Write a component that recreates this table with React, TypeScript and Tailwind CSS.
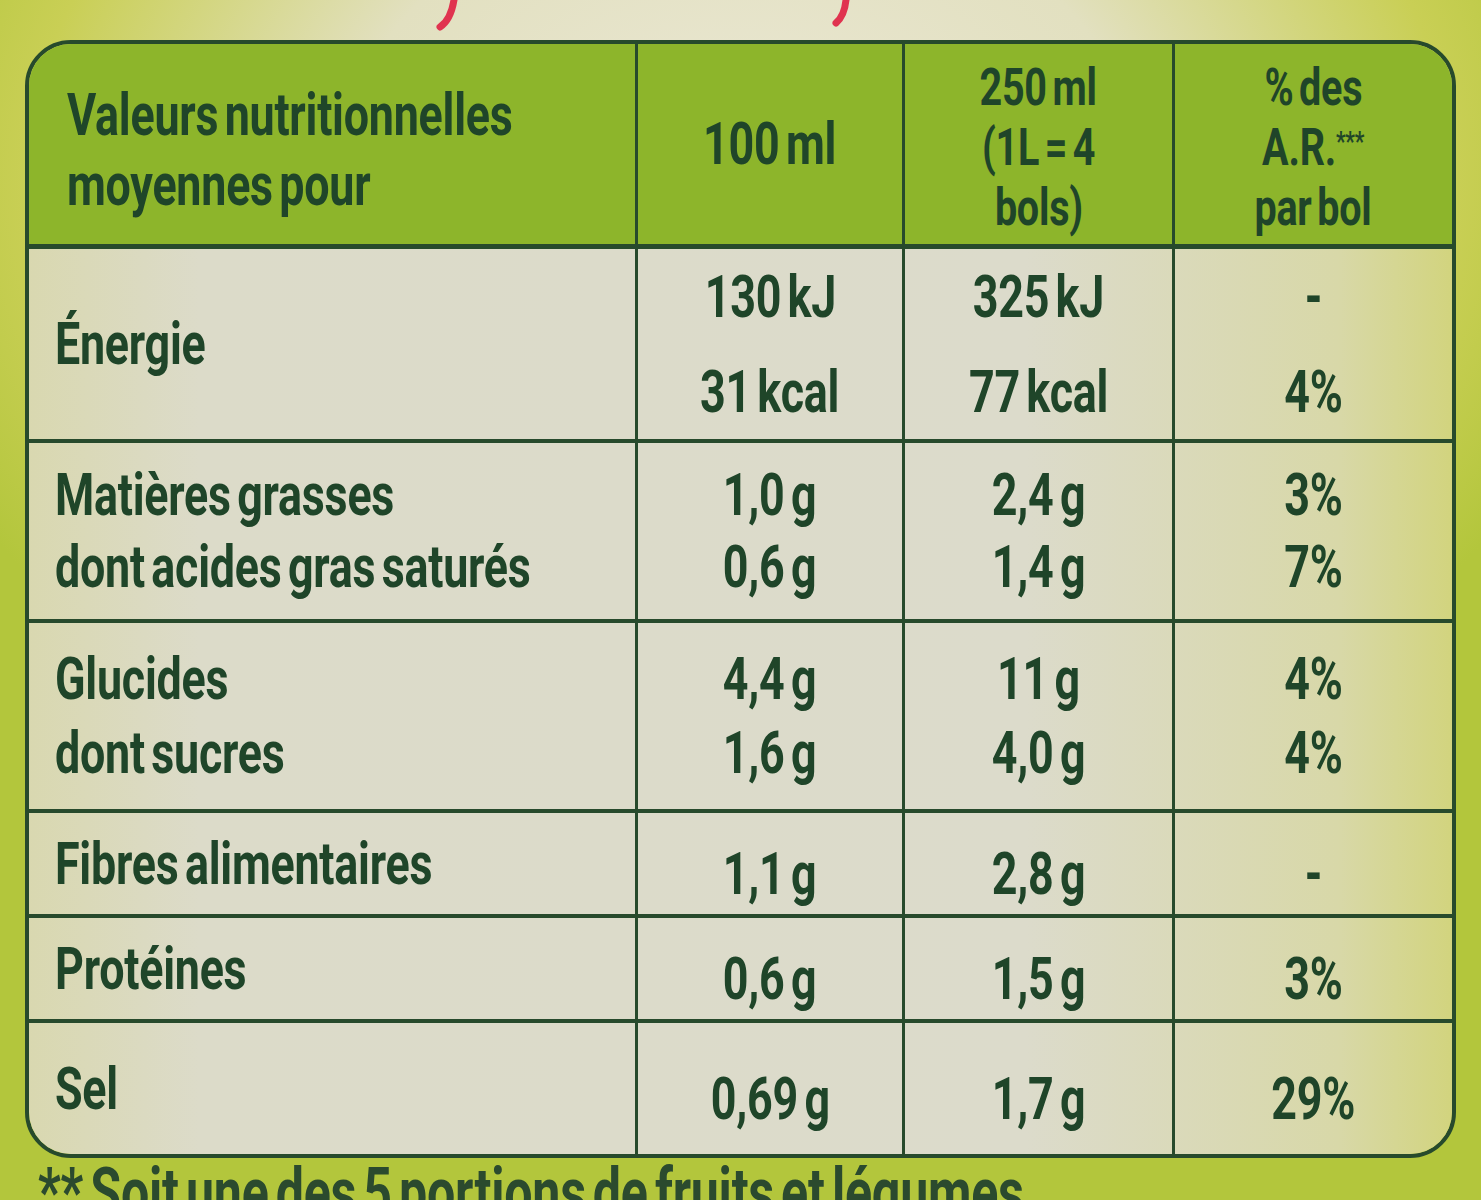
import React from "react"

const ink = "text-[#1f4529]"

const Line = ({ children, left }: { children: React.ReactNode; left?: boolean }) => (
  <span
    className={`inline-block whitespace-nowrap scale-x-[0.76] [word-spacing:-0.1em] ${
      left ? "origin-left" : "origin-center"
    }`}
  >
    {children}
  </span>
)

type Row = {
  label: string[]
  a: string[]
  b: string[]
  c: string[]
  h: string
  gap: string
}

const rows: Row[] = [
  { label: ["Énergie"], a: ["130 kJ", "31 kcal"], b: ["325 kJ", "77 kcal"], c: ["-", "4%"], h: "h-[190px]", gap: "gap-[35px]" },
  {
    label: ["Matières grasses", "dont acides gras saturés"],
    a: ["1,0 g", "0,6 g"],
    b: ["2,4 g", "1,4 g"],
    c: ["3%", "7%"],
    h: "h-[180px]",
    gap: "gap-[12px]",
  },
  { label: ["Glucides", "dont sucres"], a: ["4,4 g", "1,6 g"], b: ["11 g", "4,0 g"], c: ["4%", "4%"], h: "h-[190px]", gap: "gap-[14px]" },
  { label: ["Fibres alimentaires"], a: ["1,1 g"], b: ["2,8 g"], c: ["-"], h: "h-[105px]", gap: "gap-0" },
  { label: ["Protéines"], a: ["0,6 g"], b: ["1,5 g"], c: ["3%"], h: "h-[105px]", gap: "gap-0" },
  { label: ["Sel"], a: ["0,69 g"], b: ["1,7 g"], c: ["29%"], h: "h-[135px]", gap: "gap-0" },
]

const grid = "grid grid-cols-[606px_267px_270px_279px]"

const Cell = ({ lines, gap, first, valueShift }: { lines: string[]; gap: string; first?: boolean; valueShift?: boolean }) => (
  <div
    className={`flex flex-col justify-center leading-[60px] ${gap} ${
      first ? "items-start pl-[26px]" : "items-center border-l-[3px] border-[#274a2c]"
    } ${valueShift ? "pt-[20px]" : ""}`}
  >
    {lines.map((l, i) => (
      <Line key={i} left={first}>
        {l}
      </Line>
    ))}
  </div>
)

export default function App() {
  return (
    <div
      className={`h-[1200px] w-[1481px] overflow-hidden bg-[radial-gradient(ellipse_60%_55%_at_50%_15%,#ebe8d6_0%,#e2e0c0_45%,#c9cf55_80%,#b3c63c_100%)] font-['Roboto',sans-serif] font-bold tracking-[-0.02em] ${ink}`}
    >
      {/* red scraps of the line above */}
      <div className="flex h-[40px] items-start">
        <svg width="30" height="32" viewBox="0 0 30 32" className="ml-[430px]">
          <path d="M24 0 C22 12 18 22 10 27" stroke="#e0334f" strokeWidth="7" fill="none" strokeLinecap="round" />
        </svg>
        <svg width="30" height="30" viewBox="0 0 30 30" className="ml-[366px]">
          <path d="M20 0 C19 10 16 18 10 23" stroke="#e0334f" strokeWidth="7" fill="none" strokeLinecap="round" />
        </svg>
      </div>

      <div className="mx-[25px] overflow-hidden rounded-[46px] border-4 border-[#274a2c] text-[59px]">
        {/* header */}
        <div className={`${grid} h-[205px] border-b-[5px] border-[#274a2c] bg-[#8db52b]`}>
          <div className="flex flex-col justify-center gap-[10px] pl-[38px] pt-[12px] leading-[60px]">
            <Line left>Valeurs nutritionnelles</Line>
            <Line left>moyennes pour</Line>
          </div>
          <div className="flex items-center justify-center border-l-[3px] border-[#274a2c] leading-[60px]">
            <Line>100 ml</Line>
          </div>
          <div className="flex flex-col items-center justify-center border-l-[3px] border-[#274a2c] pt-[8px] text-[52px] leading-[60px]">
            <Line>250 ml</Line>
            <Line>(1L = 4</Line>
            <Line>bols)</Line>
          </div>
          <div className="flex flex-col items-center justify-center border-l-[3px] border-[#274a2c] pt-[8px] text-[52px] leading-[60px]">
            <Line>% des</Line>
            <Line>
              A.R.<span className="align-[14px] text-[28px] leading-none">***</span>
            </Line>
            <Line>par bol</Line>
          </div>
        </div>

        {/* body */}
        <div className="bg-[linear-gradient(90deg,#d9d8b0_0%,#dcdbc9_12%,#dcdbcb_70%,#d8d8a8_92%,#d2d47e_100%)]">
          {rows.map((r, i) => (
            <div key={i} className={`${grid} ${r.h} ${i > 0 ? "border-t-[4px] border-[#274a2c]" : ""}`}>
              <Cell lines={r.label} gap={r.gap} first />
              <Cell lines={r.a} gap={r.gap} valueShift={i > 2} />
              <Cell lines={r.b} gap={r.gap} valueShift={i > 2} />
              <Cell lines={r.c} gap={r.gap} valueShift={i > 2} />
            </div>
          ))}
        </div>
      </div>

      <div className="pl-[38px] pt-[2px] text-[66px] leading-[66px] text-[#2b4a2e]">
        <Line left>** Soit une des 5 portions de fruits et légumes</Line>
      </div>
    </div>
  )
}
